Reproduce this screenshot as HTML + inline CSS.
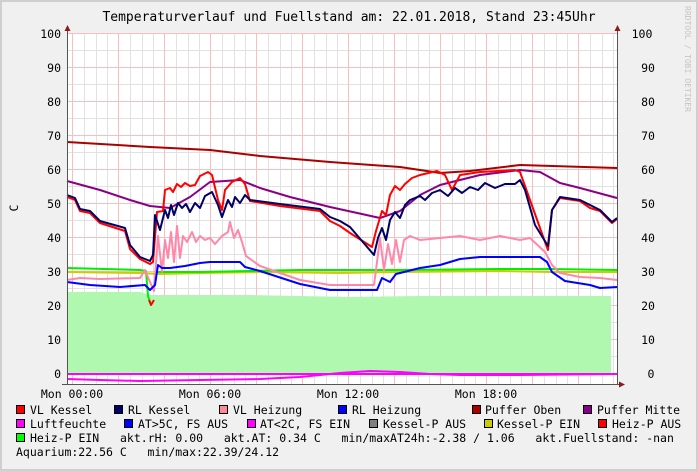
<!DOCTYPE html>
<html><head><style>
body{margin:0;padding:0;background:#f0f0f0;}
svg{display:block;}
text{font-family:"DejaVu Sans Mono","Liberation Mono",monospace;white-space:pre;}
</style></head><body>
<svg width="698" height="471" xmlns="http://www.w3.org/2000/svg">
<rect x="0" y="0" width="698" height="471" fill="#f0f0f0"/>
<path d="M0,1H697V470H1V1" fill="none" stroke="#cfcfcf" stroke-width="2"/>
<text x="349" y="21" font-size="13" text-anchor="middle" fill="#000">Temperaturverlauf und Fuellstand am: 22.01.2018, Stand 23:45Uhr</text>
<text transform="translate(685,6) rotate(90)" font-size="8" fill="#c4c4c4">RRDTOOL / TOBI OETIKER</text>
<rect x="67" y="33" width="550" height="351" fill="#fff"/>
<g stroke-width="1">
<g stroke="#e2e2e2">
<path d="M67,50.5H617M67,84.5H617M67,118.5H617M67,152.5H617M67,186.5H617M67,220.5H617M67,254.5H617M67,288.5H617M67,322.5H617M67,356.5H617"/>
<path d="M84.5,33V384M96.5,33V384M107.5,33V384M130.5,33V384M142.5,33V384M153.5,33V384M176.5,33V384M188.5,33V384M199.5,33V384M222.5,33V384M234.5,33V384M245.5,33V384M268.5,33V384M280.5,33V384M291.5,33V384M314.5,33V384M326.5,33V384M337.5,33V384M360.5,33V384M372.5,33V384M383.5,33V384M406.5,33V384M418.5,33V384M429.5,33V384M452.5,33V384M464.5,33V384M475.5,33V384M498.5,33V384M510.5,33V384M521.5,33V384M544.5,33V384M556.5,33V384M567.5,33V384M590.5,33V384M602.5,33V384M613.5,33V384"/>
</g>
<g stroke="#f6c0c0">
<path d="M67,33.5H617M67,67.5H617M67,101.5H617M67,135.5H617M67,169.5H617M67,203.5H617M67,237.5H617M67,271.5H617M67,305.5H617M67,339.5H617M67,373.5H617"/>
<path d="M72.5,33V384M118.5,33V384M164.5,33V384M210.5,33V384M256.5,33V384M302.5,33V384M348.5,33V384M394.5,33V384M440.5,33V384M486.5,33V384M532.5,33V384M578.5,33V384"/>
</g>
</g>
<polygon points="67,374 67,292 140,292 150,295 250,295 350,297 420,296 500,296 611,296 611,374" fill="#b0f8b0"/>
<g fill="none" stroke-width="2" stroke-linejoin="round">
<polyline stroke="#ff00ff" points="67,374 617,374"/>
<polyline stroke="#ff00ff" points="67,379 100,380 140,381 200,380 260,379 300,377 340,373 370,371 400,372 430,374 460,375 520,375 617,374"/>
<polyline stroke="#cccc00" points="67,272 140,273 160,274 200,273 260,272 340,273 400,272 500,271 550,272 617,272"/>
<polyline stroke="#00ee00" points="67,268 140,270 146,271 148,296 150,302"/>
<polyline stroke="#00ee00" points="156,272 200,272 250,271 300,270 400,270 500,269 550,269 617,270"/>
<polyline stroke="#ff0000" points="149,300 151,305 154,300"/>
<polyline stroke="#aa0000" points="67,142 150,147 210,150 260,156 330,162 400,167 440,173 470,171 520,165 617,168"/>
<polyline stroke="#880088" points="67,181 100,190 130,200 150,206 170,208 190,197 210,182 240,180 260,188 290,197 330,207 380,218 400,211 420,195 440,185 480,175 520,170 540,172 560,183 580,188 617,198"/>
<polyline stroke="#ff0000" points="67,197 75,200 80,211 90,213 100,223 125,231 130,249 140,259 150,264 153,262 157,212 163,211 165,190 170,188 173,192 177,184 181,187 185,183 190,186 195,185 200,176 208,172 212,175 218,200 222,210 225,190 232,182 240,178 245,184 250,201 280,206 320,211 330,221 340,226 350,233 372,247 376,231 382,211 386,215 390,195 395,186 400,190 405,184 412,178 420,175 437,171 445,175 452,190 460,175 480,172 515,170 520,172 530,200 545,242 548,250 552,210 560,198 580,201 590,208 600,211 605,216 612,223 617,219"/>
<polyline stroke="#000066" points="67,195 75,198 80,209 90,211 100,221 125,228 130,245 140,257 150,261 153,255 155,215 160,230 165,210 168,218 171,205 174,215 178,203 182,208 186,204 190,212 195,203 200,208 205,196 212,192 218,205 222,217 228,200 232,207 235,197 240,203 245,195 250,200 280,204 320,209 330,217 340,221 350,227 374,255 378,238 382,228 386,240 390,220 395,212 400,218 405,205 410,200 420,196 425,200 432,193 440,190 448,196 455,188 462,193 470,187 478,190 485,183 495,188 505,184 515,184 520,180 525,190 535,225 548,246 552,210 560,197 580,200 600,210 612,222 617,218"/>
<polyline stroke="#ff88aa" points="67,280 80,278 100,279 140,278 145,270 150,282 154,291 158,236 162,272 165,240 168,258 171,232 174,262 177,226 180,258 183,236 187,242 192,232 196,242 200,236 205,240 210,238 215,244 222,236 228,232 230,222 234,238 238,230 242,242 246,256 260,266 300,280 330,285 345,285 374,285 377,262 380,238 384,270 388,244 392,264 396,240 400,262 404,240 410,236 420,240 440,238 460,236 480,240 500,236 520,240 530,238 545,252 552,265 560,273 580,277 600,278 617,280"/>
<polyline stroke="#0000ff" points="67,282 90,285 120,287 145,285 150,290 155,285 158,265 162,268 170,268 185,266 200,263 210,262 240,262 245,267 260,271 300,284 330,290 360,290 377,290 382,278 390,282 396,274 404,272 420,268 440,265 460,259 480,257 540,257 547,262 552,272 565,281 590,285 600,288 617,287"/>
</g>
<path d="M67.5,28V384" stroke="#555" stroke-width="1"/>
<path d="M617.5,28V384" stroke="#555" stroke-width="1"/>
<path d="M62,384.5H622" stroke="#555" stroke-width="1"/>
<polygon points="67.5,25 64.5,31 70.5,31" fill="#8b1a1a"/>
<polygon points="617.5,25 614.5,31 620.5,31" fill="#8b1a1a"/>
<polygon points="625,384.5 619,381.5 619,387.5" fill="#8b1a1a"/>
<g font-size="11.5" fill="#000">
<g text-anchor="end">
<text x="61" y="38">100</text><text x="61" y="72">90</text><text x="61" y="106">80</text><text x="61" y="140">70</text><text x="61" y="174">60</text><text x="61" y="208">50</text><text x="61" y="242">40</text><text x="61" y="276">30</text><text x="61" y="310">20</text><text x="61" y="344">10</text><text x="61" y="378">0</text>
</g>
<g text-anchor="middle">
<text x="642" y="38">100</text><text x="648" y="72">90</text><text x="648" y="106">80</text><text x="648" y="140">70</text><text x="648" y="174">60</text><text x="648" y="208">50</text><text x="648" y="242">40</text><text x="648" y="276">30</text><text x="648" y="310">20</text><text x="648" y="344">10</text><text x="651" y="378">0</text>
<text x="72" y="398">Mon 00:00</text><text x="210" y="398">Mon 06:00</text><text x="348" y="398">Mon 12:00</text><text x="486" y="398">Mon 18:00</text>
</g>
<text transform="translate(18,208) rotate(-90)" text-anchor="middle">C</text>
</g>
<g stroke="#000" stroke-width="1">
<rect x="16.5" y="405.5" width="8" height="8" fill="#ff0000"/>
<rect x="114.5" y="405.5" width="8" height="8" fill="#000066"/>
<rect x="219.5" y="405.5" width="8" height="8" fill="#ff8899"/>
<rect x="338.5" y="405.5" width="8" height="8" fill="#0000ff"/>
<rect x="472.5" y="405.5" width="8" height="8" fill="#aa0000"/>
<rect x="583.5" y="405.5" width="8" height="8" fill="#880088"/>
<rect x="16.5" y="419.5" width="8" height="8" fill="#ff00ff"/>
<rect x="124.5" y="419.5" width="8" height="8" fill="#0000ff"/>
<rect x="247.5" y="419.5" width="8" height="8" fill="#ff00ff"/>
<rect x="369.5" y="419.5" width="8" height="8" fill="#808080"/>
<rect x="484.5" y="419.5" width="8" height="8" fill="#cccc00"/>
<rect x="598.5" y="419.5" width="8" height="8" fill="#ff0000"/>
<rect x="16.5" y="433.5" width="8" height="8" fill="#00ff00"/>
</g>
<g font-size="11.5" fill="#000">
<text x="30" y="414">VL Kessel</text>
<text x="128" y="414">RL Kessel</text>
<text x="233" y="414">VL Heizung</text>
<text x="352" y="414">RL Heizung</text>
<text x="485" y="414">Puffer Oben</text>
<text x="597" y="414">Puffer Mitte</text>
<text x="30" y="428">Luftfeuchte</text>
<text x="138" y="428">AT&gt;5C, FS AUS</text>
<text x="260" y="428">AT&lt;2C, FS EIN</text>
<text x="383" y="428">Kessel-P AUS</text>
<text x="497" y="428">Kessel-P EIN</text>
<text x="612" y="428">Heiz-P AUS</text>
<text x="30" y="442">Heiz-P EIN   akt.rH: 0.00   akt.AT: 0.34 C   min/maxAT24h:-2.38 / 1.06   akt.Fuellstand: -nan</text>
<text x="16" y="456">Aquarium:22.56 C   min/max:22.39/24.12</text>
</g>
</svg>
</body></html>
